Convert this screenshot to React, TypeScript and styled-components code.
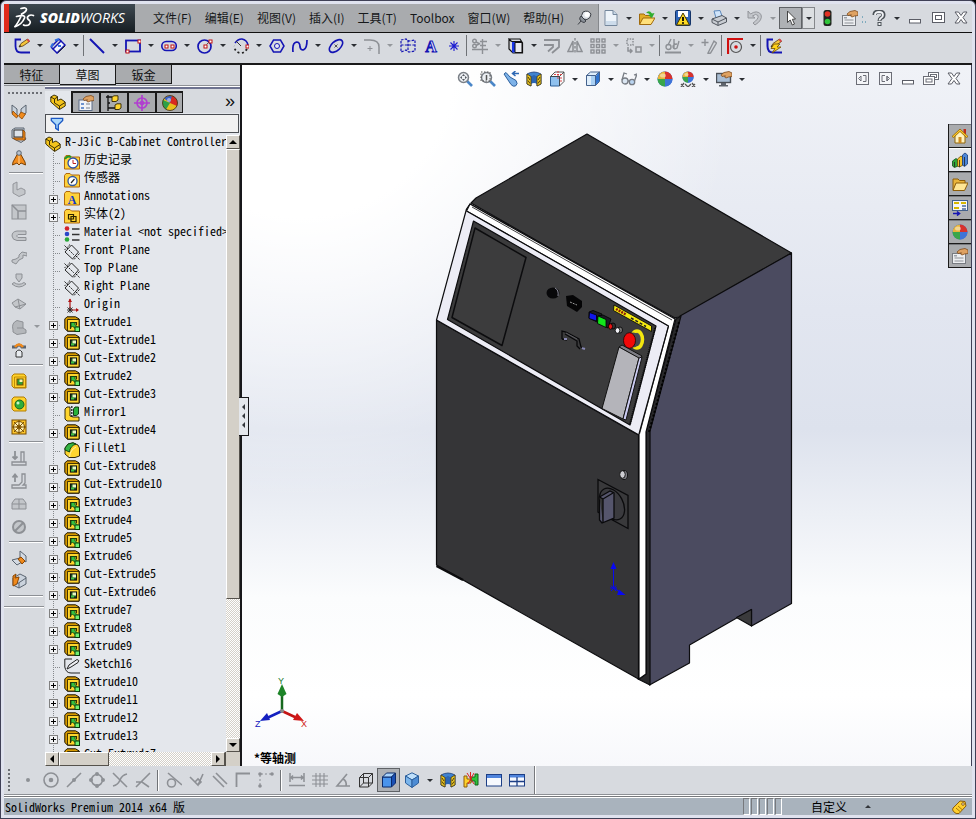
import React from "react";
import styled, { createGlobalStyle, css } from "styled-components";

const mono = `"Noto Sans Mono CJK SC", "Liberation Mono", "Noto Sans CJK SC", monospace`;
const sans = `"Noto Sans CJK SC", "Noto Sans", sans-serif`;

const Global = createGlobalStyle`
  *, *::before, *::after { box-sizing: border-box; }
  html, body, #root { height: 100%; }
  body { margin: 0; background: #000; overflow: hidden; font: 12px/16px ${sans}; color: #111; }
  button, input { font: inherit; color: inherit; margin: 0; padding: 0; border: 0; background: none; border-radius: 0; }
  svg { display: block; flex: none; }
`;

/* ---------- icons ---------- */

const BL = "#1414b4";
const GR = "#8d9095";

const redDot = (x: number, y: number) => (
  <rect x={x - 1} y={y - 1} width="3" height="3" fill="#fff" stroke="#c01010" />
);

const pencil = (
  <g>
    <path d="M5 9L7 5.500L13.500 1L15.500 3.500L9 8Z" fill="#f5c63c" stroke="#5a3a10" strokeWidth=".8" />
    <path d="M12.500 1.800L14 .7L16 3L14.500 4.200Z" fill="#d9434a" />
    <path d="M5 9L6 7L7.200 8.300Z" fill="#222" />
  </g>
);

const magnifier = (
  <g>
    <path d="M10 10L15 15" stroke="#4a86c8" strokeWidth="2.600" />
    <circle cx="6.500" cy="6.500" r="5" fill="#eceff3" stroke="#7a7f86" strokeWidth="1.500" />
  </g>
);

const ball = (
  <g>
    <circle cx="8" cy="8" r="7.500" fill="#3f74d8" />
    <path d="M8 8V.5A7.500 7.500 0 0 0 .5 8Z" fill="#3f74d8" />
    <path d="M8 8V.5A7.500 7.500 0 0 1 15.500 8Z" fill="#d8322c" />
    <path d="M8 8H.5A7.500 7.500 0 0 0 8 15.500Z" fill="#3aa64a" />
    <path d="M8 8H15.500A7.500 7.500 0 0 1 8 15.500Z" fill="#3f74d8" />
    <path d="M8 8V.5A7.500 7.500 0 0 0 .5 8Z" fill="#e8b43a" />
    <ellipse cx="6" cy="4.500" rx="3" ry="2" fill="#fff" opacity=".45" />
  </g>
);

const hand = (
  <path d="M5 4L8 1.500L13 .5L16 2V5.500L12.500 6L10 7L8.500 6L9.500 4.800L6 5.500Z" fill="#dfa262" stroke="#7d4a1c" strokeWidth=".8" />
);

const section = (
  <g>
    <path d="M1 3Q8 -1 15 3V13L11 15V6Q8 4 5 6V15L1 13Z" fill="#3f82cf" stroke="#1f3f78" strokeWidth=".8" />
    <path d="M5 5.500Q8 3.500 11 5.500V13Q8 11 5 13Z" fill="#2c66b4" />
    <path d="M1 3L5 5.500V15L1 13ZM15 3L11 5.500V15L15 13Z" fill="#e9c526" stroke="#4c3c08" strokeWidth=".8" />
    <path d="M2 6L4 9M2 9.500L4 12.500M12 9L14 6M12 12.500L14 9.500" stroke="#4c3c08" />
  </g>
);

const folder = <path d="M.5 15V3.500L2 1.500H6L7.500 3H15.500V15Z" fill="#ffd23c" stroke="#b0690c" />;

const featureBody = (
  <g>
    <path d="M.8 3L3 .8H11.500L15.200 3V15.200H3.500L.8 12.500Z" fill="#d79a00" stroke="#1c1400" />
    <path d="M3.500 3.500H15V15H3.500Z" fill="#ffd52e" stroke="#1c1400" strokeWidth=".8" />
  </g>
);

const partShape = (
  <g stroke="#2c2200" strokeWidth=".9">
    <path d="M.8 3L4 1L7.500 2.500V6.500L11 5L15.200 8V12L9.500 15.500L.8 8Z" fill="#f4c41c" />
    <path d="M.8 3L4.500 5V9L9.500 12V15M4.500 5L7.500 3M9.500 12L15 8.500" fill="none" />
  </g>
);

const wireCube = (c: string, f: string) => (
  <g fill={f} stroke={c}>
    <path d="M1.500 4.500H10.500V14.500H1.500Z" />
    <path d="M1.500 4.500L5.500 1H14.500L10.500 4.500ZM14.500 1V10.500L10.500 14.500V4.500Z" />
  </g>
);

const grayBlock = (
  <path d="M2 3L6 1V9L10 7L14 9V13L8 15.500L2 12Z" fill="#c3c6ca" stroke={GR} strokeWidth=".9" />
);

const icons: Record<string, React.ReactNode> = {
  sketch: <g><path d="M7 1.500H1.500V8Q1.500 14.500 7 14.500H16" fill="none" stroke={BL} strokeWidth="1.800" />{pencil}</g>,
  dim: <g><path d="M1 9L9 1M1 9L3 11M9 1L11 3M7 15L15 7" stroke={BL} strokeWidth="1.500" fill="none" /><path d="M3 11L11 3L15 7L7 15Z" fill="#f4f6ff" stroke={BL} strokeWidth="1.500" /><path d="M1 9L3 5.500M9 1L5 2.500M8 8L11 8" stroke="#2f6fe0" strokeWidth="2" /><path d="M8 14.500L15 8" stroke="#222" /></g>,
  line: <path d="M1 1L15 15" stroke={BL} strokeWidth="2" />,
  rect: <g><rect x="1" y="2.500" width="14" height="11" fill="none" stroke={BL} strokeWidth="1.800" />{redDot(14, 3)}{redDot(2, 13)}</g>,
  slot: <g><rect x=".8" y="3.500" width="14.500" height="9" rx="4.500" fill="none" stroke={BL} strokeWidth="1.600" />{redDot(5, 8)}{redDot(11, 8)}</g>,
  circle: <g><circle cx="7.500" cy="8.500" r="6.500" fill="none" stroke={BL} strokeWidth="1.700" /><path d="M8 8L13 3" stroke="#444" strokeDasharray="2 1" />{redDot(8, 8)}{redDot(13, 3)}</g>,
  arc: <g><path d="M2 5Q5 .8 9 1Q14 2 15 7" fill="none" stroke={BL} strokeWidth="1.600" /><path d="M3 3L8 8" stroke="#333" /><path d="M14 11Q11 15.500 7 15Q2 14 1 8" fill="none" stroke="#222" strokeWidth="1.800" strokeDasharray="2 2.500" />{redDot(14, 8)}</g>,
  polygon: <g><path d="M4.500 2H11.500L15 8L11.500 14H4.500L1 8Z" fill="none" stroke={BL} strokeWidth="1.500" /><circle cx="8" cy="8" r="2.500" fill="#e8eaf4" stroke={BL} /></g>,
  spline: <path d="M1 14Q0 5 4.500 4Q8 4 8 9Q9 13 12 11.500Q15 10 15 2" fill="none" stroke={BL} strokeWidth="1.700" />,
  ellipse: <g><ellipse cx="8" cy="8" rx="8" ry="4.500" transform="rotate(-42 8 8)" fill="none" stroke={BL} strokeWidth="1.600" /><path d="M6.500 6.500L9.500 9.500M9.500 6.500L6.500 9.500" stroke="#333" strokeWidth=".8" /></g>,
  fillet: <g fill="none" stroke={GR} strokeWidth="1.500"><path d="M0 2H6Q15 2 15 9V16" /><path d="M6 8V13M3.500 10.500H8.500" strokeWidth="1" /></g>,
  plane: <path d="M1 2L6 1L9 3L15 2V13L9 14L6 12L1 14ZM1 7H15M8 2V14" fill="none" stroke={BL} strokeWidth="1.200" strokeDasharray="2.500 1.300" />,
  text: <text x="8" y="14" textAnchor="middle" fontFamily="Liberation Serif" fontWeight="700" fontSize="16" fill="#eef" stroke={BL} strokeWidth="1">A</text>,
  point: <path d="M8 3V13M3 8H13M4.500 4.500L11.500 11.500M11.500 4.500L4.500 11.500" stroke="#1c1cd0" strokeWidth="1.100" />,
  trim: <g fill="none" stroke={GR} strokeWidth="1.400"><circle cx="2.500" cy="3" r="1.800" /><circle cx="2.500" cy="8" r="1.800" /><path d="M4 4L8 6M4 7.500L8 5.500M0 11.500H16M10.500 1V16M8 3.500H15M8 7.500H14" /></g>,
  convert: <g><path d="M3.500 3.500L1 1V11L5 15H14.500V5L12 1H1M3.500 3.500H14" fill="none" stroke="#111" strokeWidth="1.200" /><path d="M5.500 4V14.500" stroke="#1a36e8" strokeWidth="3" /><path d="M7 4.500H14V14.500H7Z" fill="#e8eaf0" stroke="#111" /></g>,
  offset: <path d="M0 2H15V9L8 15M0 7H9V9L4 13.500" fill="none" stroke={GR} strokeWidth="1.800" />,
  mirror: <g fill="none" stroke={GR} strokeWidth="1.500"><path d="M8 0V16" strokeDasharray="2.500 1.500" /><path d="M6 3V13.500H1ZM10 3V13.500H15Z" /></g>,
  pattern: <g fill="none" stroke={GR} strokeWidth="1.400">{[1, 6.5, 12].map((x) => [1, 6.5, 12].map((y) => <rect key={`${x}${y}`} x={x} y={y} width="3" height="3" />))}</g>,
  move: <g fill="none" stroke={GR} strokeWidth="1.500"><rect x="1" y="1" width="6" height="6" strokeDasharray="1.500 1.200" /><path d="M2 9V13H6M4 11L6 13L4 15" /><rect x="10" y="9" width="5" height="5" /></g>,
  relations: <g fill="none" stroke={GR} strokeWidth="1.400"><circle cx="3.500" cy="9" r="2.500" /><path d="M3 7L6 1M9 1V10M12 6Q8 6 8 9Q9 12 12 10L14 3" /><path d="M0 14.500H16" strokeWidth="2" /></g>,
  repair: <path d="M4 1V8M.5 4.500H7.500M7 15L13 3L15.500 5L9.500 15L7 15.500Z" fill="none" stroke={GR} strokeWidth="1.400" />,
  snap: <g><path d="M1 16V1H16" fill="none" stroke="#d01010" strokeWidth="2.200" /><circle cx="9" cy="9" r="5.500" fill="none" stroke="#555" strokeWidth="1.200" /><circle cx="9" cy="9" r="1.800" fill="#d01010" /></g>,
  rapid: <g><path d="M7 1.500H1.500V8Q1.500 14.500 7 14.500H16" fill="none" stroke={BL} strokeWidth="2" />{pencil}<path d="M8 6H14L11 9H15L6 15L9 10.500H5Z" fill="#ffd21a" stroke="#705000" strokeWidth=".8" /></g>,

  newdoc: <g><path d="M2 .5H10L14 4.500V15.500H2Z" fill="#eef4fa" stroke="#74879c" /><path d="M10 .5V4.500H14" fill="#c8d8e8" stroke="#74879c" /><path d="M3 11H13V15H3Z" fill="#cddceb" /></g>,
  open: <g><path d="M.5 14V4H5L6.500 5.500H12V14Z" fill="#e3ad25" stroke="#a06a0c" /><path d="M.5 14.500L4 8H16L12 14.500Z" fill="#ffe07a" stroke="#a06a0c" /><path d="M7 3Q10 -.5 13 3.500L15.500 3L13 8L9 5L11 4.500Q9.500 2.500 7 3Z" fill="#2fae2f" /></g>,
  save: <g><rect x=".5" y=".5" width="15" height="15" rx="1" fill="#2f64b8" stroke="#143468" /><rect x="3" y="1" width="10" height="6" fill="#fff" /><path d="M8 3L14.500 15H1.500Z" fill="#ffdb21" stroke="#463800" /><path d="M8 7V11" stroke="#000" strokeWidth="1.800" /><circle cx="8" cy="13" r="1" /></g>,
  print: <g><path d="M3 1L9 .5L11 6L5 8Z" fill="#cfe4fa" stroke="#5c88bb" /><path d="M1 9L11 5.500L15.500 8V12L7 15.500L1 12.500Z" fill="#c8ccd2" stroke="#50565e" /><path d="M1 9L7 12L15.500 8M7 12V15" fill="none" stroke="#50565e" /></g>,
  undo: <path d="M1 1V8H8L5.500 6Q9 3 11 5.500Q12 9 6 13L8 15Q16 10 14 4.500Q10 -.5 3.500 4Z" fill="#c3c6cb" stroke={GR} strokeWidth=".9" />,
  cursor: <path d="M4.500 1V12.500L7.200 10L9.300 15L11.500 14L9.300 9.300L12.500 9Z" fill="#fff" stroke="#444" />,
  traffic: <g><rect x="4.500" y="0" width="8" height="16" rx="2.500" fill="#20241f" /><circle cx="8.500" cy="4" r="2.800" fill="#e23122" /><circle cx="8.500" cy="11.500" r="2.800" fill="#2fc43a" /></g>,
  options: <g><rect x=".5" y="5.500" width="13" height="10" fill="#eceef1" stroke="#787c82" /><path d="M2.500 10H11.500M2.500 13H11.500" stroke="#8c9096" /><rect x="2" y="7" width="3" height="1.500" fill="#9aa0a8" />{hand}</g>,
  dots: <path d="M1 7H2M1 12H2M4 12H5" stroke="#2a7d9c" strokeWidth="1" />,
  help: <g fill="none"><path d="M3.500 5Q3.500 1.500 8 1.500Q12.500 1.500 12.500 5Q12.500 7 10 8Q8.500 9 8.500 11" stroke="#4c5258" strokeWidth="4" /><path d="M4 5Q4 2 8 2Q12 2 12 5Q12 7 10 8Q8.500 9 8.500 10.500" stroke="#f0f2f5" strokeWidth="1.800" /><rect x="7" y="12.500" width="3" height="3" fill="#f0f2f5" stroke="#4c5258" /></g>,
  min: <rect x="2.500" y="9.500" width="11" height="3.500" fill="#fff" stroke="#5b5d66" />,
  max: <g fill="#fff" stroke="#5b5d66"><rect x="2.500" y="2.500" width="12" height="10" /><rect x="5.500" y="5.500" width="6" height="4" /></g>,
  cascade: <g fill="#fff" stroke="#6b6d76"><rect x="5.500" y="1.500" width="10" height="7" /><rect x="7.500" y="3.500" width="6" height="3" /><rect x=".5" y="5.500" width="11" height="8" /><rect x="3" y="8" width="6" height="3" /></g>,
  close: <path d="M2 2H5.500L8 5.500L10.500 2H14L10 7.500L14 13H10.500L8 9.500L5.500 13H2L6 7.500Z" fill="#fff" stroke="#5b5d66" />,
  paneL: <g fill="none" stroke="#6b6d76"><rect x="2.500" y="1.500" width="12" height="12" fill="#f4f5f8" /><path d="M7 5L4.500 7.500L7 10M7 5V10M9 4.500H12V10.500H9" /></g>,
  paneR: <g fill="none" stroke="#6b6d76"><rect x="2.500" y="1.500" width="12" height="12" fill="#f4f5f8" /><path d="M8 4.500H5V10.500H8M10 5L12.500 7.500L10 10ZM10 5V10" /></g>,
  pin: <g><path d="M6 2Q11 -.5 14 4Q14 8 10 9.500L6 9Q3 6 6 2Z" fill="#dfe3e8" stroke="#3c4046" /><path d="M4 6L9 11Q7 13.500 5.500 12L3 10Q2 8 4 6ZM4 11L1 14.500" fill="#8a9098" stroke="#3c4046" /><circle cx="10" cy="4.500" r="2.500" fill="#fff" /></g>,

  zoomFit: <g>{magnifier}<path d="M6.500 3L8 5H5ZM6.500 10L8 8H5ZM3 6.500L5 5V8ZM10 6.500L8 5V8Z" fill="#555a61" /></g>,
  zoomArea: <g>{magnifier}<rect x="1" y="1" width="9" height="9" fill="none" stroke="#555" strokeDasharray="1.500 1.500" /><path d="M6.500 4V9" stroke="#555" strokeWidth="1.500" /></g>,
  prevView: <g><path d="M1 3L3 1.500L7 6L13 9.500Q15.500 13 12.500 15Q10 16 8 13.500L5 9Z" fill="#7db2e8" stroke="#2c5f9c" /><path d="M16 2.500H10M12.500 0L9.500 2.500L12.500 5" fill="none" stroke="#2c68b4" strokeWidth="1.500" /></g>,
  section,
  orient: <g><path d="M1.500 5.500H10.500V15H1.500Z" fill="#8fc1ee" stroke="#2d5f97" /><path d="M1.500 5.500L6 1H15V10.500L10.500 15V5.500ZM10.500 5.500L15 1" fill="none" stroke="#444" strokeWidth=".9" /><path d="M9 0V8M5 3.500H14M12 6V12" stroke="#d33" strokeWidth=".9" strokeDasharray="2 1" /></g>,
  display: <g>{wireCube("#44618c", "#dfeefb")}<path d="M11 5L14 1.500V10.500L11 13.500Z" fill="#2f74d0" /><path d="M6 5H10V14H6Z" fill="#a9d0f4" /></g>,
  glasses: <g fill="none" stroke="#777c84" strokeWidth="1.300"><circle cx="4" cy="10" r="3" fill="#dbe6f2" /><circle cx="11" cy="11" r="2.700" fill="#b9d4f0" /><path d="M1 9L3 2L6 3M13.500 10L16 3L13 4M7 10L8.500 10" /></g>,
  ball,
  scene: <g><g transform="translate(2 0) scale(.75)">{ball}</g><path d="M1 16L4 12M15 16L12 12M1 13L4 16M15 13L12 16M5 13L8 16L11 13" fill="none" stroke="#555" strokeWidth="1.300" /></g>,
  viewSet: <g><rect x=".5" y="2.500" width="14" height="9" fill="#a8bdd4" stroke="#4a4f56" strokeWidth="1.400" /><path d="M5 12H10V14H12V15.500H3V14H5Z" fill="#5e646c" />{hand}</g>,

  home: <g><rect x="11.500" y="1" width="2.500" height="5" fill="#c02a1a" /><path d="M3 8V15H13V8L8 3Z" fill="#fff3c0" stroke="#8f6508" /><path d="M0 8.500L8 1L16 8.500L14.500 9.500L8 3.500L1.500 9.500Z" fill="#ffc928" stroke="#8f6508" strokeWidth=".8" /><rect x="6.500" y="9" width="3" height="6" fill="#cf8b1e" /></g>,
  library: <g strokeWidth=".8"><path d="M.5 9L4 6.500L6 8V14L2.500 15.500L.5 14Z" fill="#2fa63a" stroke="#0d4d14" /><path d="M5.500 7L9 4L11 5.500V13L7.500 15L5.500 14Z" fill="#f0c02c" stroke="#6e4f00" /><path d="M10.500 3L13 1L15.500 3V12L12.500 14.500L10.500 13Z" fill="#4b86d8" stroke="#143a78" /><path d="M2.500 10V15M7.500 8V15M12.500 5V14" stroke="#222" /></g>,
  explorer: <g><path d="M1 14V3H6L7.500 4.500H13V7" fill="#e9b43a" stroke="#8c5d0a" /><path d="M1 14.500L4 7H16L12.500 14.500Z" fill="#ffe694" stroke="#8c5d0a" /></g>,
  palette: <g><rect x=".5" y=".5" width="15" height="10" fill="#f2f5f9" stroke="#44618c" /><path d="M2 3H7M9 3H14M2 8H7" stroke="#d8b800" strokeWidth="2" /><path d="M10 6H14M10 9H14" stroke="#4a6a9a" strokeWidth="1.500" /><path d="M1 13.500H7M5 11.500L7.500 13.500L5 15.500" stroke={BL} strokeWidth="1.600" fill="none" /></g>,

  part: partShape,
  props: <g><rect x="1" y="5" width="13" height="10.500" fill="#f1f3f6" stroke="#5d6d88" /><rect x="3" y="8" width="3" height="2" fill="#6d93cf" /><rect x="3" y="12" width="3" height="2" fill="#6d93cf" /><path d="M8 9H12M8 13H12" stroke="#7b828c" />{hand}</g>,
  config: <g strokeWidth=".9"><path d="M2 0V16M0 2H6M2 8H4M2 13H9" stroke="#111" strokeWidth="1.300" fill="none" /><path d="M6 2L8 .8H12V5L10 6.500H6ZM9 10L11 8.800H15V13L13 14.500H9Z" fill="#ffd52e" stroke="#2c2200" /></g>,
  dimx: <g fill="none" stroke="#b13fd0" strokeWidth="1.700"><circle cx="8" cy="8" r="5" /><circle cx="8" cy="8" r="1.500" fill="#b13fd0" /><path d="M8 0V16M0 8H16" /></g>,
  display2: <g><circle cx="8" cy="8" r="7.500" fill="#e8c01e" /><path d="M8 8L2 3.500Q8 -2 14 4Z" fill="#3a62c8" /><path d="M8 8L10 .8Q17 4 15 11Z" fill="#d82a22" /><path d="M8 8L1 5Q-.5 11 4 14.500Z" fill="#2da04a" /><circle cx="7" cy="5" r="2" fill="#fff" opacity=".5" /><circle cx="8" cy="8" r="7.500" fill="none" stroke="#3a2a10" strokeWidth=".8" /></g>,
  filter: <path d="M1.500 1.500H14.500V4L9.500 9V15L6.500 13V9L1.500 4Z" fill="#a9d7fb" stroke="#1c58c4" strokeWidth="1.500" />,

  history: <g>{folder}<circle cx="9" cy="9" r="5" fill="#fff" stroke="#2b4ea8" strokeWidth="1.300" /><path d="M9 6V9.500H12" stroke="#c02020" fill="none" /><path d="M1 5Q3 1.500 7 3" stroke="#1b9a2c" strokeWidth="2" fill="none" /></g>,
  sensor: <g>{folder}<circle cx="8.500" cy="9" r="4.500" fill="#fff" stroke="#33589c" strokeWidth="1.300" /><path d="M7 11L10.500 7" stroke="#222" strokeWidth="1.200" /></g>,
  annot: <g>{folder}<text x="8" y="13.500" textAnchor="middle" fontFamily="Liberation Serif" fontWeight="700" fontSize="12" fill="#1238c8">A</text></g>,
  bodies: <g>{folder}<path d="M4.500 6.500H9.500V11H4.500ZM7 8.500H12V13.500H7Z" fill="#ffd52e" stroke="#2c2200" strokeWidth="1.200" /></g>,
  material: <g><circle cx="3" cy="2.500" r="2.300" fill="#d3222a" /><circle cx="3" cy="8" r="2.300" fill="#2a46c8" /><circle cx="3" cy="13.500" r="2.300" fill="#28a838" /><path d="M8 3H15.500M8 8.500H15.500M8 14H15.500" stroke="#333" strokeWidth="1.600" /></g>,
  planeT: <g fill="none" stroke="#111" strokeWidth=".9"><path d="M7.500 1L14.500 8L8.500 15L1 8Z" /><path d="M.5 1.500L4 5M12 12L16 16M5 6L10 11M15.500 9.500L10 15.500M6 .5L.5 6" strokeDasharray="2 1" /></g>,
  origin: <g stroke="#b01414" strokeWidth="1.200" fill="#b01414"><path d="M6 1V12M6 12H14" fill="none" /><path d="M4 4L6 .5L8 4ZM12 10L15 12L12 14Z" stroke="none" /><path d="M3.500 9.500L8.500 14.500M8.500 9.500L3.500 14.500M6 9V15M3 12H9" stroke="#222" strokeWidth=".9" /></g>,
  extrude: <g>{featureBody}<path d="M6.500 13V6.500H12.500V9" fill="none" stroke="#3a2c00" strokeWidth="1.200" /><path d="M7 6.500H12L10.500 8L13.500 11L11.500 13L8.500 10L7 11.500Z" fill="#35c040" stroke="#083c0c" strokeWidth=".8" /><rect x="11" y="11" width="4.500" height="4.500" fill="#6fee70" stroke="#083c0c" /></g>,
  cut: <g>{featureBody}<rect x="6.500" y="6" width="6" height="6" fill="#1f5d23" stroke="#111" strokeWidth="1.200" /><rect x="8.500" y="6.500" width="3.500" height="3" fill="#e8f6c4" /><rect x="7" y="9.500" width="3" height="2" fill="#3fc046" /></g>,
  mirrorT: <g strokeWidth=".9"><path d="M1 3L3 1H6V10L9 11H15V15H3L1 13Z" fill="#ffd52e" stroke="#1c1400" /><path d="M9.500 3L11 1H14.500V8L12.500 9.500H9.500Z" fill="#28b23a" stroke="#062c0a" /><path d="M7.800 0V11" stroke="#222" strokeWidth="1.300" strokeDasharray="2 1" /></g>,
  filletT: <g strokeWidth=".9"><path d="M1 6L4 2L9 .8L14 3L15.500 6V14L11 15.500H5L1 12Z" fill="#ffd52e" stroke="#1c1400" /><path d="M1 6L4 2L9 .8L12 2Q6 4 5.500 10L1 8Z" fill="#35b444" stroke="#083c0c" /><path d="M12 5Q6 8 5.500 15" fill="none" stroke="#fff6b0" /></g>,
  sketchT: <g fill="none" stroke="#222"><path d="M8 1H.8V9Q2 15 7 15H16" /><path d="M3 11L5 7L13 1.500Q16 2 14 4.500L7 9Z" fill="#eef0f4" /></g>,

  planeA: <g><path d="M1 1L6 5V13L1 9Z" fill="#c9d2dc" stroke="#59636f" /><path d="M15 1L10 5V13L15 9Z" fill="#c9d2dc" stroke="#59636f" /><path d="M2 7L7 12L5.500 14L1 10ZM10 8L14.500 10L11 15L7.500 12Z" fill="#f08a1c" stroke="#8a4704" strokeWidth=".8" /></g>,
  shell: <g><path d="M1 3L4 1H13V9L15 12L10 15.500L1 11Z" fill="#c6ced8" stroke="#59636f" /><path d="M3 3H12V10H3Z" fill="#dde3ea" stroke="#333" /><path d="M2 11H12V3L14 5V13H5Z" fill="#f08a1c" stroke="#8a4704" strokeWidth=".8" /></g>,
  loft: <g><path d="M7 3L2 12L1.500 15L6 13L8 15L10 13L14.500 15L14 12L9 3Z" fill="#f08a1c" stroke="#7a4206" /><path d="M8 5V14" stroke="#ffd49a" /><circle cx="8" cy="3" r="2.300" fill="#b9c2cd" stroke="#59636f" /></g>,
  g1: grayBlock,
  g2: <g><rect x="1" y="1" width="14" height="14" fill="#c3c6ca" stroke={GR} /><path d="M1 1L7 7V15M7 7H15" stroke={GR} fill="none" strokeWidth="1.500" /></g>,
  g3: <path d="M15 4H6Q1 4.500 1 9Q1.500 13 6 13.500H15V10.500H7Q4 9 7 7.500H15Z" fill="#c3c6ca" stroke={GR} />,
  g4: <path d="M1 12L5 14L8 10L12 8V5L16 6V3L11 2L8 5V7L5 9L1 10Z" fill="#c3c6ca" stroke={GR} />,
  g5: <path d="M5 1H11V5L8 9L5 5ZM1 11Q8 17 15 11L13 9.500Q8 13 3 9.500Z" fill="#c3c6ca" stroke={GR} />,
  g6: <path d="M1 7L7 3L15 8L9 13L4 11ZM7 3L9 13M4 11L15 8" fill="#c3c6ca" stroke={GR} />,
  g7: <path d="M2 11Q0 4 6 1.500L12 3V9L15 11V14L6 15.500L2 13ZM6 9H12" fill="#b4b7bb" stroke={GR} />,
  dome: <g><path d="M1 5H5Q8 1 11 5H15" fill="none" stroke="#59636f" strokeWidth="3" /><path d="M4 5Q8 0 12 5" fill="none" stroke="#f08a1c" strokeWidth="2.500" /><path d="M5 15V10Q8 6 11 10V15Z" fill="#e9edf1" stroke="#333" /></g>,
  wizard: <g><path d="M1 3L3 1H13L15 3V15H3L1 13Z" fill="#ffd22a" stroke="#b37c00" /><path d="M3.500 4H14.500V14.500H3.500Z" fill="none" stroke="#b37c00" strokeWidth=".8" /><rect x="6" y="6" width="6" height="6" fill="#2f9c36" stroke="#7a4f00" /><rect x="8.500" y="6.500" width="3" height="2.500" fill="#fff5b8" /></g>,
  hole: <g><path d="M1 3L3 1H13L15 3V15H3L1 13Z" fill="#ffd22a" stroke="#b37c00" /><circle cx="8.500" cy="8.500" r="4.500" fill="#2fae3a" stroke="#186020" /><circle cx="7" cy="7" r="1.500" fill="#c6f5c6" /></g>,
  vent: <g><rect x="1" y="1" width="14" height="14" fill="#ffc62a" stroke="#7a4f00" /><circle cx="8" cy="8" r="5.500" fill="#fff0b4" stroke="#7a4f00" /><circle cx="8" cy="8" r="2" fill="#ffc62a" stroke="#7a4f00" /><path d="M8 1V15M1 8H15M3 3L13 13M13 3L3 13" stroke="#7a4f00" /></g>,
  g8: <g fill="none" stroke={GR} strokeWidth="1.300"><path d="M4 1V9M1.500 6.500L4 9L6.500 6.500" strokeWidth="1.800" /><path d="M1 12H15V15H1ZM10 12V2H13V12" /></g>,
  g9: <g fill="none" stroke={GR} strokeWidth="1.300"><path d="M4 9V2M1.500 4.500L4 1.500L6.500 4.500" strokeWidth="1.800" /><path d="M1 12H8L11 9V1H14V10L12 12H15V15H1Z" /></g>,
  g10: <path d="M1 7L4 3H12L15 7V13H1ZM1 8H15M8 3V13" fill="#c3c6ca" stroke={GR} />,
  g11: <g fill="#c3c6ca" stroke={GR} strokeWidth="2"><circle cx="8" cy="8" r="6" /><path d="M4 12L12 4" /></g>,
  refGeom: <g><path d="M9 1V8L15 12V6ZM9 8L1 10L6 15L11 12Z" fill="#d3dae3" stroke="#59636f" /><path d="M7 9L10 7L14 11L11 14Z" fill="#f08a1c" stroke="#8a4704" /></g>,
  refGeom2: <g><path d="M2 5L9 1L15 4V11L8 15L2 12Z" fill="#cbd3dd" stroke="#59636f" /><path d="M2 3L5 1L4 5L8 4L6 11L2 13Z" fill="#f08a1c" stroke="#8a4704" /><path d="M6 11L15 5M8 10V15" stroke="#59636f" /></g>,

  s1: <circle cx="8" cy="8" r="2" fill={GR} />,
  s2: <g fill="none" stroke={GR} strokeWidth="1.600"><circle cx="8" cy="8" r="7" /><circle cx="8" cy="8" r="1.500" fill={GR} /></g>,
  s3: <g><path d="M1 15L15 1" stroke={GR} strokeWidth="1.600" /><circle cx="8" cy="8" r="2" fill={GR} /></g>,
  s4: <g fill="none" stroke={GR} strokeWidth="1.600"><circle cx="8" cy="8" r="5.500" />{[[8, 2], [8, 14], [2, 8], [14, 8]].map(([x, y]) => <circle key={`${x}-${y}`} cx={x} cy={y} r="2" fill={GR} stroke="none" />)}</g>,
  s5: <path d="M1 1L15 15M1 14Q6 13 8 8Q10 3 15 2" fill="none" stroke={GR} strokeWidth="1.600" />,
  s6: <path d="M1 15L15 1M1 10H7L14 15" fill="none" stroke={GR} strokeWidth="1.600" />,
  s7: <g fill="none" stroke={GR} strokeWidth="1.600"><circle cx="5.500" cy="11" r="4" /><path d="M2 1L16 13" /></g>,
  s8: <path d="M1 5L9 13L14 2M6 10L9 7L12 10L9 13" fill="none" stroke={GR} strokeWidth="1.600" />,
  s9: <path d="M1 4L12 15M4 1L15 12" stroke={GR} strokeWidth="1.600" />,
  s10: <path d="M1.500 15V1.500H15" fill="none" stroke={GR} strokeWidth="1.800" />,
  s11: <g><path d="M2 13V2H14" fill="none" stroke={GR} strokeDasharray="2 2" /><circle cx="2" cy="2" r="1.800" fill={GR} /><circle cx="14" cy="2" r="1.800" fill={GR} /><circle cx="2" cy="14" r="1.800" fill={GR} /></g>,
  s12: <path d="M1 1V10M15 1V10M2 5.500H14M4 3.500L2 5.500L4 7.500M12 3.500L14 5.500L12 7.500M0 13.500H16" fill="none" stroke={GR} strokeWidth="1.500" />,
  s13: <path d="M4 1V15M8 1V15M12 1V15M0 4H16M0 8H16M0 12H16" stroke={GR} strokeWidth="1.100" />,
  s14: <path d="M12 2L2 14H15M8 7Q12 9 11 14" fill="none" stroke={GR} strokeWidth="1.600" />,
  wire: <g fill="none" stroke="#333"><path d="M1.500 5.500H10.500V15H1.500ZM5.500 1.500H14.500V11H5.500ZM1.500 5.500L5.500 1.500M10.500 5.500L14.500 1.500M1.500 15L5.500 11M10.500 15L14.500 11" /></g>,
  shaded: <g stroke="#0b2a6a"><path d="M1.500 5H10.500V15H1.500Z" fill="#4a94ec" /><path d="M1.500 5L5.500 1H14.500L10.500 5Z" fill="#a9d3fb" /><path d="M14.500 1V11L10.500 15V5Z" fill="#1b50b4" /></g>,
  iso: <g stroke="#2c5f9c"><path d="M8 .8L14.500 4L8 8L1.500 4Z" fill="#bfe0fb" /><path d="M1.500 4L8 8V15.500L1.500 11Z" fill="#7ab5ec" /><path d="M14.500 4L8 8V15.500L14.500 11Z" fill="#4d8cd4" /></g>,
  interfere: <g><path d="M1 4H4V7H8V11H4V15H1Z" fill="#ffd22a" stroke="#8c5d0a" /><path d="M15 2H12V5H8V9H12V13H15Z" fill="#2fc43a" stroke="#14601c" /><path d="M4 1L11 12M11 1L5 12M7.500 0V8" stroke="#e02020" /></g>,
  win: <g><rect x=".5" y="2.500" width="15" height="11.500" fill="#f6f9fe" stroke="#1d3f86" /><rect x="1" y="3" width="14" height="3" fill="#4f84dc" /></g>,
  win4: <g><rect x=".5" y="2.500" width="15" height="11.500" fill="#f6f9fe" stroke="#1d3f86" /><rect x="1" y="3" width="14" height="2.500" fill="#4f84dc" /><path d="M8 5V14M1 9.500H15" stroke="#1d3f86" strokeWidth="1.300" /></g>,
  tag: <g><path d="M2 9L9 2L14 2.500L15 7L8 14.500Q5 15.500 2.500 12.500Q1 11 2 9Z" fill="#ffcf2e" stroke="#8c5d0a" /><path d="M5 9L9 12.500M7 7L11 10.500" stroke="#a87808" /><circle cx="12" cy="5" r="1.300" fill="#fff" stroke="#8c5d0a" /></g>,
};

const Icon = ({ name }: { name: string }) => (
  <svg width="16" height="16" viewBox="0 0 16 16" aria-hidden="true">{icons[name]}</svg>
);

/* ---------- shared bar parts ---------- */

const ToolButton = styled.button<{ $pressed?: boolean }>`
  flex: none;
  width: 23px;
  height: 22px;
  display: grid;
  place-items: center;
  ${(p) => p.$pressed && css`background: #aeb1b5; border: 1px solid #5f6266;`}
`;

const CaretButton = styled.button<{ $dim?: boolean; $boxed?: boolean }>`
  flex: none;
  width: 13px;
  height: 22px;
  display: grid;
  place-items: center;
  &::after {
    content: "";
    border: 3px solid transparent;
    border-top-color: ${(p) => (p.$dim ? "#94979c" : "#2b2e33")};
    border-bottom-width: 0;
  }
  ${(p) => p.$boxed && css`background: #dcdfe2; border: 1px solid #85888c;`}
`;

const Divider = styled.span`
  flex: none;
  width: 1px;
  height: 21px;
  margin: 0 1px;
  background: #6f7276;
`;

const WideDivider = styled(Divider)`
  width: 2px;
  margin: 0 3px;
  border-right: 1px solid #fff;
`;

type Tool = { i: string; n: string; menu?: boolean; dim?: boolean; pressed?: boolean; tail?: "thin" | "wide" };

const Tools = ({ items }: { items: Tool[] }) => (
  <>
    {items.map((t) => (
      <React.Fragment key={t.n}>
        <ToolButton type="button" aria-label={t.n} $pressed={t.pressed}><Icon name={t.i} /></ToolButton>
        {t.menu && <CaretButton type="button" aria-label={`${t.n} 选项`} $dim={t.dim} $boxed={t.pressed} />}
        {t.tail === "thin" && <Divider />}
        {t.tail === "wide" && <WideDivider />}
      </React.Fragment>
    ))}
  </>
);

/* ---------- window frame ---------- */

const Frame = styled.div`
  height: 100vh;
  display: flex;
  flex-direction: column;
  padding: 3px;
  border: 1px solid #3f4056;
  border-radius: 6px 6px 0 0;
  background: #dfe2ee;
`;

const TitleBar = styled.header`
  flex: none;
  height: 29px;
  display: flex;
  background: #a9abae;
  border-bottom: 1px solid #111;
`;

const Brand = styled.div`
  flex: none;
  width: 131px;
  display: flex;
  align-items: center;
  gap: 5px;
  padding-left: 4px;
  border-left: 5px solid #e02a1c;
  background: linear-gradient(#3e4951, #171e23);
  color: #fff;
  font: italic 400 14px/16px "Open Sans", sans-serif;
  b { font-weight: 800; }
`;

const MenuBar = styled.nav`
  flex: 1;
  display: flex;
  align-items: center;
  gap: 13px;
  padding-left: 18px;
  white-space: nowrap;
`;

const MenuItem = styled.button`
  height: 24px;
  color: #16181a;
`;

const QuickBar = styled.div`
  flex: none;
  display: flex;
  align-items: center;
  background: #d7dadf;
  border-left: 1px solid #85888c;
`;

const SketchBar = styled.div`
  flex: none;
  height: 32px;
  display: flex;
  align-items: center;
  padding: 0 6px 5px;
  background: #d7dadf;
  border-bottom: 2px solid #1a1a1a;
`;

const Body = styled.main`
  flex: 1;
  min-height: 0;
  display: flex;
`;

/* ---------- left pane ---------- */

const LeftPane = styled.aside`
  flex: none;
  width: 236px;
  display: flex;
  flex-direction: column;
  background: #d7dadf;
`;

const CommandTabs = styled.div`
  flex: none;
  height: 20px;
  display: flex;
  align-items: flex-start;
`;

const CommandTab = styled.button<{ $on?: boolean }>`
  width: 56px;
  height: ${(p) => (p.$on ? 20 : 19)}px;
  background: ${(p) => (p.$on ? "#d7dadf" : "#a9abae")};
  border: solid #1a1a1a;
  border-width: 0 1px 1px 0;
  line-height: 15px;
`;

const LeftLower = styled.div`
  flex: 1;
  min-height: 0;
  display: flex;
`;

const Strip = styled.div`
  flex: none;
  width: 41px;
  display: flex;
  flex-direction: column;
  align-items: flex-start;
  padding: 2px 0 0 3px;
  border-top: 1px solid #8d9095;
  ${ToolButton} { height: 23px; }
`;

const Grip = styled.span`
  width: 34px;
  height: 2px;
  margin: 4px 0 6px 1px;
  background: repeating-linear-gradient(90deg, #6b6e74 0 2px, transparent 2px 4px);
`;

const StripRule = styled.span<{ $wide?: boolean }>`
  width: ${(p) => (p.$wide ? 40 : 34)}px;
  height: 2px;
  margin: ${(p) => (p.$wide ? "6px 0 0 -3px" : "3px 0 3px 2px")};
  background: #8d9095;
  border-bottom: 1px solid #fff;
`;

const StripRow = styled.div`
  display: flex;
  align-items: center;
`;

const Manager = styled.section`
  flex: 1;
  min-width: 0;
  display: flex;
  flex-direction: column;
  border-top: 1px solid #8d9095;
  background: #e4e7ec;
`;

const ManagerTabs = styled.div`
  flex: none;
  height: 27px;
  display: flex;
  align-items: flex-end;
  background: #d7dadf;
  border-top: 1px solid #fff;
  box-shadow: inset 0 2px #6d7290;
`;

const ManagerTab = styled.button<{ $on?: boolean }>`
  width: ${(p) => (p.$on ? 26 : 28)}px;
  height: 22px;
  display: grid;
  place-items: center;
  background: ${(p) => (p.$on ? "#e4e7ec" : "#a9abae")};
  border: solid #1a1a1a;
  border-width: ${(p) => (p.$on ? "0" : "2px 0 1px 2px")};
  &:nth-last-child(2) { border-right-width: 1px; }
`;

const More = styled.button`
  margin-left: auto;
  width: 20px;
  height: 24px;
  font: 18px/18px "Liberation Sans", sans-serif;
`;

const FilterBox = styled.label`
  flex: none;
  height: 19px;
  margin: 1px 1px 2px 0;
  padding-left: 4px;
  display: flex;
  align-items: center;
  gap: 4px;
  border: 1px solid #4c4f54;
  background: #f1f1f1;
  input { flex: 1; min-width: 0; height: 16px; outline: 0; }
`;

const TreeArea = styled.div`
  flex: 1;
  min-height: 0;
  display: flex;
`;

const TreeList = styled.ul`
  flex: 1;
  min-width: 0;
  margin: 0;
  padding: 0;
  list-style: none;
  overflow: hidden;
  font: 12px/12px ${mono};
  color: #000;
  white-space: pre;
`;

const TreeRow = styled.li`
  height: 18px;
  display: flex;
  gap: 4px;
`;

const RowIcon = styled.span`
  padding-top: 1px;
`;

const Gutter = styled.span`
  flex: none;
  width: 15px;
  height: 18px;
  background:
    repeating-linear-gradient(#85888c 0 1px, transparent 1px 2px) 8px 0 / 1px 100% no-repeat,
    repeating-linear-gradient(90deg, #85888c 0 1px, transparent 1px 2px) 8px 10px / 11px 1px no-repeat;
`;

const Expander = styled.button`
  display: block;
  width: 9px;
  height: 9px;
  margin: 6px 0 0 4px;
  border: 1px solid #808080;
  background:
    linear-gradient(#000, #000) center / 5px 1px no-repeat,
    linear-gradient(#000, #000) center / 1px 5px no-repeat,
    #f2f3f5;
`;

const checker = css`
  background: repeating-conic-gradient(#fff 0 25%, #d4d0c8 0 50%) 0 0 / 2px 2px;
`;

const VScroll = styled.div`
  flex: none;
  width: 14px;
  display: flex;
  flex-direction: column;
  ${checker}
`;

const HScroll = styled.div`
  flex: none;
  height: 14px;
  display: flex;
  ${checker}
`;

const raised = css`
  background: #d4d0c8;
  border: 1px solid;
  border-color: #fff #55524c #55524c #fff;
`;

const ScrollButton = styled.button<{ $dir: "up" | "down" | "left" | "right" }>`
  flex: none;
  width: 14px;
  height: 14px;
  display: grid;
  place-items: center;
  ${raised}
  &::after {
    content: "";
    border: 4px solid transparent;
    ${(p) => p.$dir === "up" && "border-bottom-color:#000;border-top-width:0;"}
    ${(p) => p.$dir === "down" && "border-top-color:#000;border-bottom-width:0;"}
    ${(p) => p.$dir === "left" && "border-right-color:#000;border-left-width:0;"}
    ${(p) => p.$dir === "right" && "border-left-color:#000;border-right-width:0;"}
  }
`;

const VThumb = styled.div`
  flex: 0 0 73%;
  margin-bottom: auto;
  ${raised}
`;

const HThumb = styled.div`
  flex: none;
  width: 50px;
  margin-right: auto;
  ${raised}
`;

const Corner = styled.span`
  flex: none;
  width: 15px;
  border-left: 1px solid #55524c;
  background: #d4d0c8;
`;

const Splitter = styled.div`
  flex: none;
  position: relative;
  width: 2px;
  background: #17171a;
`;

const SplitHandle = styled.button`
  position: absolute;
  z-index: 1;
  left: -1px;
  top: 50%;
  width: 10px;
  height: 39px;
  margin-top: -19px;
  display: flex;
  flex-direction: column;
  align-items: center;
  justify-content: center;
  gap: 3px;
  background: #e4e7ec;
  border: 1px solid #17171a;
  border-left: 0;
  i { border: 3px solid transparent; border-right-color: #33363b; border-left-width: 0; }
`;

/* ---------- graphics area ---------- */

const Viewport = styled.section`
  flex: 1;
  min-width: 0;
  display: flex;
  flex-direction: column;
  border-right: 1px solid #3f4056;
  background:
    radial-gradient(ellipse 60% 62% at 8% 0%, #fff 0%, #fff 35%, rgba(255, 255, 255, 0) 100%),
    linear-gradient(#f0f2f7 0%, #e2e6f0 35%, #dde2ed 52%, #fbfcfd 76%, #fff 90%, #f7f8fb 100%);
`;

const ViewBar = styled.div`
  flex: none;
  height: 28px;
  display: flex;
  align-items: center;
  justify-content: flex-end;
`;

const ViewTools = styled.div`
  display: flex;
  margin-right: 102px;
`;

const DocControls = styled.div`
  display: flex;
  padding-right: 6px;
`;

const Stage = styled.div`
  flex: 1;
  min-height: 0;
  display: grid;
  grid-template-columns: 192px 1fr 23px;
`;

const StageCorner = styled.div`
  display: flex;
  flex-direction: column;
  justify-content: flex-end;
  padding-left: 12px;
`;

const ViewName = styled.div`
  height: 36px;
  padding-top: 20px;
  font: 700 12px/15px ${mono};
  color: #000;
`;

const Model = styled.div`
  padding-top: 38px;
  min-width: 0;
  overflow: hidden;
`;

const TaskPane = styled.nav`
  margin-top: 31px;
`;

const TaskButton = styled.button<{ $on?: boolean }>`
  width: 23px;
  height: 24px;
  display: grid;
  place-items: center;
  background: ${(p) => (p.$on ? "#e4e7ec" : "#a9abae")};
  border: solid #1a1a1a;
  border-width: 0 0 1px 1px;
  box-shadow: inset 0 1px ${(p) => (p.$on ? "#fff" : "#77797d")};
`;

/* ---------- bottom bars ---------- */

const BottomBar = styled.div`
  flex: none;
  height: 32px;
  display: flex;
  align-items: center;
  padding: 0 0 4px 4px;
  background:
    linear-gradient(#8d9095 0 1px, #fff 1px 2px, #77797d 2px 3px, #fff 3px 4px) 0 100% / 100% 4px no-repeat,
    #d7dadf;
  ${ToolButton} { height: 24px; }
`;

const BarGrip = styled.span`
  width: 2px;
  height: 22px;
  margin-right: 6px;
  background: repeating-linear-gradient(#6b6e74 0 2px, transparent 2px 4px);
`;

const BarEnd = styled.span`
  width: 2px;
  height: 28px;
  margin-left: 6px;
  background: #77797d;
  border-right: 1px solid #fff;
`;

const StatusBar = styled.footer`
  flex: none;
  height: 17px;
  display: flex;
  align-items: center;
  padding: 0 5px 0 1px;
  background: #a9b3bd;
  font: 12px/15px ${mono};
  color: #000;
`;

const StatusText = styled.span`
  flex: 1;
  min-width: 0;
  white-space: pre;
`;

const Slots = styled.span`
  display: flex;
  gap: 1px;
  margin-right: 29px;
  i { width: 7px; height: 17px; border: 1px solid; border-color: #77797d #fff #fff #77797d; }
`;

const UnitButton = styled.button`
  display: flex;
  align-items: center;
  gap: 18px;
  margin-right: 80px;
  &::after { content: ""; border: 3px solid transparent; border-top-width: 0; border-bottom-color: #33363b; }
`;

const TagButton = styled.button``;

/* ---------- drawings ---------- */

const DsLogo = () => (
  <svg width="22" height="22" viewBox="0 0 22 22" aria-hidden="true">
    <g fill="none" stroke="#fff" strokeWidth="1.700" strokeLinecap="round">
      <path d="M8 1.500Q13.500 0 13.500 2.500Q13 5 8.500 7M3.500 9.500Q12.500 7 11.500 11Q9 17.500 1.500 20Q4.500 17 8 9.500" />
      <path d="M20.500 8.500Q16.500 7 14.500 10Q14 12 16.500 13.500Q18.500 15.500 15.500 18Q12.500 19 10.500 18" />
    </g>
  </svg>
);

const Cabinet = () => (
  <svg width="362" height="558" viewBox="434 131 362 558" role="img" aria-label="R-J3iC B-Cabinet Controller">
    <g stroke="#0c0c0e" strokeWidth="1.200" strokeLinejoin="round">
      <path d="M587 134L791.500 253L680 317L672 318L471 203L476 198Z" fill="#3b3b3c" />
      <path d="M680 316L791.500 253V603.500L751.500 626V609.500L689.500 645V663L649.500 685V431Z" fill="#4b4b60" />
      <path d="M751.500 609.500V626L736.500 617.500Z" fill="#3a3a3c" />
      <path d="M676 319L681 316L650 431V685L638 679L646 673V431Z" fill="#29292b" />
      <path d="M436.500 320L638.500 435V679L436.500 565Z" fill="#353537" />
      <path d="M436.500 320L466.500 209L470 204L675 318L646 430V674L639 679V435Z" fill="#ececf5" />
      <path d="M466.500 211L470 204L675 319L646 432V674L639 679V434L668.500 326Z" fill="#fff" />
      <path d="M472 207L672 320M639.500 434L668.500 326L467 211" fill="none" strokeWidth=".8" />
      <path d="M473.500 221L656 326L630 425L447.500 319.500Z" fill="#3b3b3c" />
      <path d="M475 228L526 257.500L502 345.500L452 317.500Z" fill="#3c3c3d" strokeWidth="1.500" />
    </g>
    <path d="M655 328L630 424" stroke="#0c0c0e" strokeWidth="2" strokeDasharray="1 1" />
    <path d="M679 322L649 432" stroke="#000" strokeWidth="2" strokeDasharray="2 2" />
    <ellipse cx="553" cy="293" rx="6.500" ry="5.500" fill="#08080a" />
    <path d="M555 288Q559 290 558 296" fill="none" stroke="#8d8d9b" />
    <path d="M566 296L573 295L582 301V307L577 312L567 306Z" fill="#050506" />
    <path d="M570 302L577 305" stroke="#999" strokeDasharray="2 1" />
    <g stroke="#000" strokeWidth=".8">
      <path d="M589 312L593 310.500L602 314L599 323L589 318Z" fill="#1c1c24" />
      <path d="M589.500 312.500L596.500 315V321L589 318.500Z" fill="#1218e8" />
      <path d="M598 316L603 315L611 319L608 328L598 323Z" fill="#1c1c24" />
      <path d="M598 316L606 319.500V327.500L597.500 323.500Z" fill="#13e61c" />
      <ellipse cx="613" cy="326" rx="2.500" ry="3" fill="#333" />
      <ellipse cx="610.500" cy="326.500" rx="2" ry="2.800" fill="#e81414" />
      <ellipse cx="620" cy="330" rx="2.500" ry="3" fill="#777" />
      <ellipse cx="617.500" cy="330.500" rx="2.300" ry="2.800" fill="#f0f0f5" />
      <path d="M614 305L651.500 326V331.500L613.500 310.500Z" fill="#f4ea10" />
    </g>
    <path d="M616 309L626 314.500" stroke="#8c1c08" strokeWidth="2.500" strokeDasharray="2 1" />
    <path d="M631 318L646 326.500" stroke="#222" strokeWidth="1.500" strokeDasharray="3 2" />
    <ellipse cx="637" cy="339.500" rx="5.500" ry="8.500" fill="#4a4a5c" stroke="#f2e60e" strokeWidth="3.500" />
    <ellipse cx="633" cy="340" rx="7" ry="7.500" fill="#46464f" />
    <ellipse cx="629.500" cy="340.500" rx="6" ry="7.800" fill="#f20808" stroke="#240000" strokeWidth=".8" />
    <path d="M562 339V331L566 332L579 339L581 347L584 348M562 339L567 340M565 334L577 341V346L580 349" fill="none" stroke="#08080a" strokeWidth="1.300" />
    <path d="M566 333L577 339" stroke="#66666c" strokeWidth=".8" />
    <path d="M582 348L585 349M564 339L567 339" stroke="#8888b4" strokeWidth="2" />
    <g stroke="#111" strokeWidth="1">
      <path d="M619 347L622 345L642 356L640 359Z" fill="#7c7c84" />
      <path d="M619 347L639 358L623 419L602 408.500Z" fill="#b4b4ba" />
      <path d="M639 358L642 357L626 420L623 419Z" fill="#ccccf2" />
      <ellipse cx="624" cy="475" rx="3.500" ry="4.500" fill="#85858c" />
      <ellipse cx="622.500" cy="474.500" rx="2.800" ry="3.800" fill="#cdcdd2" />
    </g>
    <g stroke="#0a0a0c" strokeWidth="1.300">
      <path d="M598 479.500L628 495.500V528.500L598 512Z" fill="#39393b" />
      <ellipse cx="612" cy="504" rx="11" ry="17" transform="rotate(-28 612 504)" fill="#3a3a3e" />
      <path d="M599.500 497L610 491L614 493V518L602 523L599.500 520Z" fill="#55556c" />
      <path d="M599.500 497L603 499V523M603 499L613 493" fill="#333" />
    </g>
    <path d="M436.500 566L463 580" stroke="#0c0c0e" strokeWidth="2.500" />
    <g stroke="#0808f4" fill="#0808f4">
      <path d="M613.500 588V566M610 588H617M611 585.500L616 591M616 585.500L611 591M613.500 588L622 593" fill="none" strokeWidth="1" />
      <path d="M610.500 569L613.500 562L616.500 569ZM619 589.500L625.500 595L617 595Z" stroke="none" />
    </g>
  </svg>
);

const Triad = () => (
  <svg width="54" height="56" viewBox="254 674 54 56" role="img" aria-label="参考三重轴">
    <path d="M282 711V690" stroke="#16681e" strokeWidth="2.500" />
    <path d="M282 684L277.500 694L282 697L286.500 694Z" fill="#1d8428" />
    <path d="M282 711L267 718" stroke="#1420c0" strokeWidth="2.500" />
    <path d="M260 721L267 713L270 720Z" fill="#1420c0" />
    <path d="M282 711L297 718" stroke="#c41414" strokeWidth="2.500" />
    <path d="M304 721L297 713L293 720Z" fill="#d01818" />
    <circle cx="282" cy="711" r="2" fill="#888" />
    <g fontFamily="Liberation Sans" fontSize="9">
      <text x="278" y="684" fill="#16782a">Y</text>
      <text x="255" y="727" fill="#1420c0">Z</text>
      <text x="301" y="727" fill="#d01818">X</text>
    </g>
  </svg>
);

/* ---------- data ---------- */

const menus = ["文件(F)", "编辑(E)", "视图(V)", "插入(I)", "工具(T)", "Toolbox", "窗口(W)", "帮助(H)"];

const quick: Tool[] = [
  { i: "newdoc", n: "新建", menu: true }, { i: "open", n: "打开", menu: true }, { i: "save", n: "保存", menu: true },
  { i: "print", n: "打印", menu: true }, { i: "undo", n: "撤消", menu: true, dim: true },
  { i: "cursor", n: "选择", menu: true, pressed: true }, { i: "traffic", n: "重建模型" }, { i: "options", n: "选项" },
];

const windowTools: Tool[] = [
  { i: "help", n: "帮助", menu: true }, { i: "min", n: "最小化" }, { i: "max", n: "还原" }, { i: "close", n: "关闭" },
];

const sketchTools: Tool[] = [
  { i: "sketch", n: "草图绘制", menu: true }, { i: "dim", n: "智能尺寸", menu: true, tail: "thin" },
  { i: "line", n: "直线", menu: true }, { i: "rect", n: "边角矩形", menu: true }, { i: "slot", n: "槽口", menu: true },
  { i: "circle", n: "圆", menu: true }, { i: "arc", n: "圆弧", menu: true }, { i: "polygon", n: "多边形" },
  { i: "spline", n: "样条曲线", menu: true }, { i: "ellipse", n: "椭圆", menu: true },
  { i: "fillet", n: "绘制圆角", menu: true, dim: true }, { i: "plane", n: "基准面" }, { i: "text", n: "文字" },
  { i: "point", n: "点", tail: "thin" }, { i: "trim", n: "剪裁实体", menu: true, dim: true },
  { i: "convert", n: "转换实体引用", menu: true }, { i: "offset", n: "等距实体" }, { i: "mirror", n: "镜向实体" },
  { i: "pattern", n: "线性草图阵列", menu: true, dim: true }, { i: "move", n: "移动实体", menu: true, dim: true, tail: "thin" },
  { i: "relations", n: "显示几何关系", menu: true, dim: true }, { i: "repair", n: "修复草图", tail: "thin" },
  { i: "snap", n: "快速捕捉", menu: true, tail: "thin" }, { i: "rapid", n: "快速草图" },
];

const viewTools: Tool[] = [
  { i: "zoomFit", n: "整屏显示全图" }, { i: "zoomArea", n: "局部放大" }, { i: "prevView", n: "上一视图" },
  { i: "section", n: "剖面视图" }, { i: "orient", n: "视图定向", menu: true }, { i: "display", n: "显示样式", menu: true },
  { i: "glasses", n: "隐藏/显示项目", menu: true }, { i: "ball", n: "编辑外观" }, { i: "scene", n: "应用布景", menu: true },
  { i: "viewSet", n: "视图设定", menu: true },
];

const docControls: Tool[] = [
  { i: "paneL", n: "左窗格" }, { i: "paneR", n: "右窗格" }, { i: "min", n: "最小化文档" },
  { i: "cascade", n: "还原文档" }, { i: "close", n: "关闭文档" },
];

const stripGroups: string[][] = [
  ["planeA", "shell", "loft"],
  ["g1", "g2", "g3", "g4", "g5", "g6", "g7", "dome"],
  ["wizard", "hole", "vent"],
  ["g8", "g9", "g10", "g11"],
  ["refGeom", "refGeom2"],
];

const bottomTools: Tool[] = [
  { i: "s1", n: "端点捕捉" }, { i: "s2", n: "中心点捕捉" }, { i: "s3", n: "中点捕捉" }, { i: "s4", n: "象限点捕捉" },
  { i: "s5", n: "交叉点捕捉" }, { i: "s6", n: "最近点捕捉", tail: "wide" }, { i: "s7", n: "相切捕捉" },
  { i: "s8", n: "垂直捕捉" }, { i: "s9", n: "平行捕捉" }, { i: "s10", n: "水平竖直捕捉" },
  { i: "s11", n: "点捕捉", tail: "wide" }, { i: "s12", n: "长度捕捉" }, { i: "s13", n: "网格捕捉" },
  { i: "s14", n: "角度捕捉" }, { i: "wire", n: "线架图" }, { i: "shaded", n: "带边线上色", pressed: true },
  { i: "iso", n: "等轴测", menu: true }, { i: "section", n: "剖面" }, { i: "interfere", n: "干涉检查" },
  { i: "win", n: "单一视图" }, { i: "win4", n: "四视图" },
];

type Node = [icon: string, label: string, expandable?: boolean];

const ex = (n: number): Node => ["extrude", `Extrude${n}`, true];
const cut = (n: number): Node => ["cut", `Cut-Extrude${n}`, true];

const nodes: Node[] = [
  ["history", "历史记录"], ["sensor", "传感器"], ["annot", "Annotations", true], ["bodies", "实体(2)", true],
  ["material", "Material <not specified>"], ["planeT", "Front Plane"], ["planeT", "Top Plane"],
  ["planeT", "Right Plane"], ["origin", "Origin"], ex(1), cut(1), cut(2), ex(2), cut(3), ["mirrorT", "Mirror1"],
  cut(4), ["filletT", "Fillet1"], cut(8), cut(10), ex(3), ex(4), ex(5), ex(6), cut(5), cut(6), ex(7), ex(8), ex(9),
  ["sketchT", "Sketch16"], ex(10), ex(11), ex(12), ex(13), cut(7),
];

/* ---------- page ---------- */

const Tree = () => (
  <TreeList role="tree" aria-label="FeatureManager 设计树">
    <TreeRow role="treeitem"><RowIcon><Icon name="part" /></RowIcon>R-J3iC B-Cabinet Controller</TreeRow>
    {nodes.map(([icon, label, expandable]) => (
      <TreeRow key={label} role="treeitem">
        <Gutter>{expandable && <Expander type="button" aria-label={`展开 ${label}`} />}</Gutter>
        <RowIcon><Icon name={icon} /></RowIcon>
        {label}
      </TreeRow>
    ))}
  </TreeList>
);

export default function App() {
  return (
    <>
      <Global />
      <Frame>
        <TitleBar>
          <Brand><DsLogo /><span><b>SOLID</b>WORKS</span></Brand>
          <MenuBar>
            {menus.map((m) => <MenuItem key={m} type="button">{m}</MenuItem>)}
            <MenuItem type="button" aria-label="固定菜单"><Icon name="pin" /></MenuItem>
          </MenuBar>
          <QuickBar>
            <Tools items={quick} />
            <svg width="6" height="16" viewBox="0 0 6 16" aria-hidden="true">{icons.dots}</svg>
            <Tools items={windowTools} />
          </QuickBar>
        </TitleBar>

        <SketchBar><Tools items={sketchTools} /></SketchBar>

        <Body>
          <LeftPane>
            <CommandTabs role="tablist">
              <CommandTab type="button" role="tab">特征</CommandTab>
              <CommandTab type="button" role="tab" aria-selected $on>草图</CommandTab>
              <CommandTab type="button" role="tab">钣金</CommandTab>
            </CommandTabs>
            <LeftLower>
              <Strip>
                <Grip />
                {stripGroups.map((group) => (
                  <React.Fragment key={group[0]}>
                    {group.map((name) => (
                      <StripRow key={name}>
                        <ToolButton type="button" aria-label={name}><Icon name={name} /></ToolButton>
                        {name === "g7" && <CaretButton type="button" aria-label="更多" $dim />}
                      </StripRow>
                    ))}
                    <StripRule />
                  </React.Fragment>
                ))}
                <StripRule $wide />
              </Strip>
              <Manager>
                <ManagerTabs role="tablist">
                  {["part", "props", "config", "dimx", "display2"].map((name, k) => (
                    <ManagerTab key={name} type="button" role="tab" aria-label={name} $on={k === 0}><Icon name={name} /></ManagerTab>
                  ))}
                  <More type="button" aria-label="更多标签">»</More>
                </ManagerTabs>
                <FilterBox>
                  <svg width="14" height="14" viewBox="0 0 16 16" aria-hidden="true">{icons.filter}</svg>
                  <input aria-label="过滤器" />
                </FilterBox>
                <TreeArea>
                  <Tree />
                  <VScroll>
                    <ScrollButton type="button" aria-label="向上" $dir="up" />
                    <VThumb />
                    <ScrollButton type="button" aria-label="向下" $dir="down" />
                  </VScroll>
                </TreeArea>
                <HScroll>
                  <ScrollButton type="button" aria-label="向左" $dir="left" />
                  <HThumb />
                  <ScrollButton type="button" aria-label="向右" $dir="right" />
                  <Corner />
                </HScroll>
              </Manager>
            </LeftLower>
          </LeftPane>
          <Splitter>
            <SplitHandle type="button" aria-label="收起面板"><i /><i /><i /></SplitHandle>
          </Splitter>
          <Viewport>
            <ViewBar>
              <ViewTools><Tools items={viewTools} /></ViewTools>
              <DocControls><Tools items={docControls} /></DocControls>
            </ViewBar>
            <Stage>
              <StageCorner>
                <Triad />
                <ViewName>*等轴测</ViewName>
              </StageCorner>
              <Model><Cabinet /></Model>
              <TaskPane>
                {["home", "library", "explorer", "palette", "ball", "options"].map((name, k) => (
                  <TaskButton key={name} type="button" aria-label={name} $on={k === 1}><Icon name={name} /></TaskButton>
                ))}
              </TaskPane>
            </Stage>
          </Viewport>
        </Body>

        <BottomBar>
          <BarGrip />
          <Tools items={bottomTools} />
          <BarEnd />
        </BottomBar>
        <StatusBar>
          <StatusText>SolidWorks Premium 2014 x64 版</StatusText>
          <Slots><i /><i /><i /><i /><i /></Slots>
          <UnitButton type="button">自定义</UnitButton>
          <TagButton type="button" aria-label="标签"><Icon name="tag" /></TagButton>
        </StatusBar>
      </Frame>
    </>
  );
}
